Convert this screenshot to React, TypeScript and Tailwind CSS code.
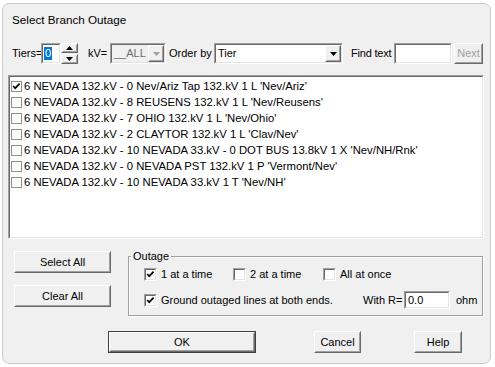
import type { ReactNode } from "react";
import clsx from "clsx";

const rows = [
  { text: "6 NEVADA 132.kV - 0 Nev/Ariz Tap 132.kV 1 L 'Nev/Ariz'", checked: true },
  { text: "6 NEVADA 132.kV - 8 REUSENS 132.kV 1 L 'Nev/Reusens'", checked: false },
  { text: "6 NEVADA 132.kV - 7 OHIO 132.kV 1 L 'Nev/Ohio'", checked: false },
  { text: "6 NEVADA 132.kV - 2 CLAYTOR 132.kV 1 L 'Clav/Nev'", checked: false },
  { text: "6 NEVADA 132.kV - 10 NEVADA 33.kV - 0 DOT BUS 13.8kV 1 X 'Nev/NH/Rnk'", checked: false },
  { text: "6 NEVADA 132.kV - 0 NEVADA PST 132.kV 1 P 'Vermont/Nev'", checked: false },
  { text: "6 NEVADA 132.kV - 10 NEVADA 33.kV 1 T 'Nev/NH'", checked: false },
];

function Sunken({
  className,
  inner = "bg-white",
  children,
}: {
  className?: string;
  inner?: string;
  children?: ReactNode;
}) {
  return (
    <div
      className={clsx(
        "shrink-0 border border-t-[#a0a0a0] border-l-[#a0a0a0] border-r-white border-b-white",
        className
      )}
    >
      <div
        className={clsx(
          "h-full w-full border border-t-[#696969] border-l-[#696969] border-r-[#e3e3e3] border-b-[#e3e3e3]",
          inner
        )}
      >
        {children}
      </div>
    </div>
  );
}

function Raised({
  className,
  children,
}: {
  className?: string;
  children?: ReactNode;
}) {
  return (
    <div
      className={clsx(
        "shrink-0 border border-t-white border-l-white border-r-[#696969] border-b-[#696969] bg-[#f0f0f0]",
        className
      )}
    >
      <div className="flex h-full w-full items-center justify-center border border-t-[#f0f0f0] border-l-[#f0f0f0] border-r-[#a0a0a0] border-b-[#a0a0a0]">
        {children}
      </div>
    </div>
  );
}

function Tick() {
  return (
    <svg viewBox="0 0 9 9" className="block h-full w-full">
      <polyline
        points="1.2,4 3.2,6.2 7.6,1.6"
        fill="none"
        stroke="#000"
        strokeWidth="1.7"
      />
    </svg>
  );
}

function Check({ checked }: { checked?: boolean }) {
  return <Sunken className="h-[13px] w-[13px]">{checked && <Tick />}</Sunken>;
}

function Arrow({ color = "#000", up = false }: { color?: string; up?: boolean }) {
  return (
    <svg width="7" height="4" viewBox="0 0 7 4" className="block">
      <polygon points={up ? "0,4 7,4 3.5,0" : "0,0 7,0 3.5,4"} fill={color} />
    </svg>
  );
}

function Combo({
  className,
  text,
  disabled,
}: {
  className?: string;
  text: string;
  disabled?: boolean;
}) {
  return (
    <Sunken
      className={clsx("h-[21px]", className)}
      inner={disabled ? "bg-[#f0f0f0]" : "bg-white"}
    >
      <div className="flex h-full items-center">
        <span
          className={clsx(
            "flex-1 pl-[2px] leading-none",
            disabled ? "text-[#6d6d6d]" : "text-black"
          )}
        >
          {text}
        </span>
        <Raised className="h-full w-[16px]">
          <Arrow color={disabled ? "#a0a0a0" : "#000"} />
        </Raised>
      </div>
    </Sunken>
  );
}

export default function App() {
  return (
    <div
      className="h-[367px] w-[495px] overflow-hidden bg-white text-[11px] text-black"
      style={{ fontFamily: '"Liberation Sans", Arial, sans-serif' }}
    >
      <div className="ml-[2px] mt-[3px] flex h-[361px] w-[489px] flex-col rounded-[7px] border border-[#cccccc] bg-[#f0f0f0]">

        {/* Title */}

        <div className="ml-[9px] mt-[8px] h-[16px] text-[11.7px] leading-[16px]">
          Select Branch Outage
        </div>

        {/* Filter row */}

        <div className="mt-[15px] flex h-[21px] items-center">
          <span className="ml-[9px] w-[29px] whitespace-nowrap">Tiers=</span>
          <Sunken className="h-[21px] w-[20px]">
            <div className="flex h-full items-center pl-[1px]">
              <span className="bg-[#0078d7] px-[1px] leading-[13px] text-white">0</span>
            </div>
          </Sunken>
          <div className="flex h-[21px] w-[17px] flex-col">
            <Raised className="h-[10px] w-full">
              <Arrow up />
            </Raised>
            <Raised className="mt-[1px] h-[10px] w-full">
              <Arrow />
            </Raised>
          </div>
          <span className="ml-[10px] w-[22px] whitespace-nowrap">kV=</span>
          <Combo className="w-[56px]" text="__ALL" disabled />
          <span className="ml-[3px] w-[45px] whitespace-nowrap">Order by</span>
          <Combo className="w-[129px]" text="Tier" />
          <span className="ml-[8px] w-[43px] whitespace-nowrap tracking-[-0.2px]">Find text</span>
          <Sunken className="h-[21px] w-[58px]" />
          <Raised className="ml-[2px] h-[21px] w-[29px]">
            <span className="text-[#a0a0a0]">Next</span>
          </Raised>
        </div>

        {/* Branch list */}

        <Sunken className="ml-[5px] mt-[11px] h-[164px] w-[476px]">
          <div className="pt-[1px] text-[11.3px]">
            {rows.map((row) => (
              <div key={row.text} className="flex h-[16px] items-center whitespace-nowrap">
                <div className="ml-[1px] mr-[2px] h-[11px] w-[11px] shrink-0 border border-[#8e8f8f] bg-white">
                  {row.checked && <Tick />}
                </div>
                <span>{row.text}</span>
              </div>
            ))}
          </div>
        </Sunken>

        {/* Selection buttons and outage options */}

        <div className="mt-[12px] flex h-[65px] items-start">
          <div className="ml-[11px] flex flex-col gap-[12px]">
            <Raised className="h-[22px] w-[97px]">Select All</Raised>
            <Raised className="h-[22px] w-[97px]">Clear All</Raised>
          </div>

          <div className="relative ml-[17px] mt-[5px] h-[60px] w-[355px] border border-[#a0a0a0] shadow-[1px_1px_0_#fff,inset_1px_1px_0_#fff]">
            <span className="absolute -top-[8px] left-[2px] bg-[#f0f0f0] px-[2px] leading-[14px]">
              Outage
            </span>

            <div className="mt-[9px] flex h-[16px] items-center pl-[15px]">
              <div className="flex w-[89px] items-center gap-[4px]">
                <Check checked />
                <span>1 at a time</span>
              </div>
              <div className="flex w-[90px] items-center gap-[4px]">
                <Check />
                <span>2 at a time</span>
              </div>
              <div className="flex items-center gap-[4px]">
                <Check />
                <span>All at once</span>
              </div>
            </div>

            <div className="mt-[9px] flex h-[18px] items-center pl-[15px]">
              <div className="flex w-[219px] items-center gap-[4px]">
                <Check checked />
                <span className="whitespace-nowrap">Ground outaged lines at both ends.</span>
              </div>
              <span className="w-[41px] whitespace-nowrap">With R=</span>
              <Sunken className="h-[18px] w-[46px]">
                <div className="flex h-full items-center pl-[2px]">0.0</div>
              </Sunken>
              <span className="ml-[6px]">ohm</span>
            </div>
          </div>
        </div>

        {/* Dialog buttons */}

        <div className="mt-[15px] flex h-[22px]">
          <div className="ml-[105px] h-[22px] w-[148px] border border-[#404040]">
            <Raised className="h-full w-full">OK</Raised>
          </div>
          <Raised className="ml-[58px] h-[22px] w-[47px]">Cancel</Raised>
          <Raised className="ml-[53px] h-[22px] w-[48px]">Help</Raised>
        </div>

      </div>
    </div>
  );
}
